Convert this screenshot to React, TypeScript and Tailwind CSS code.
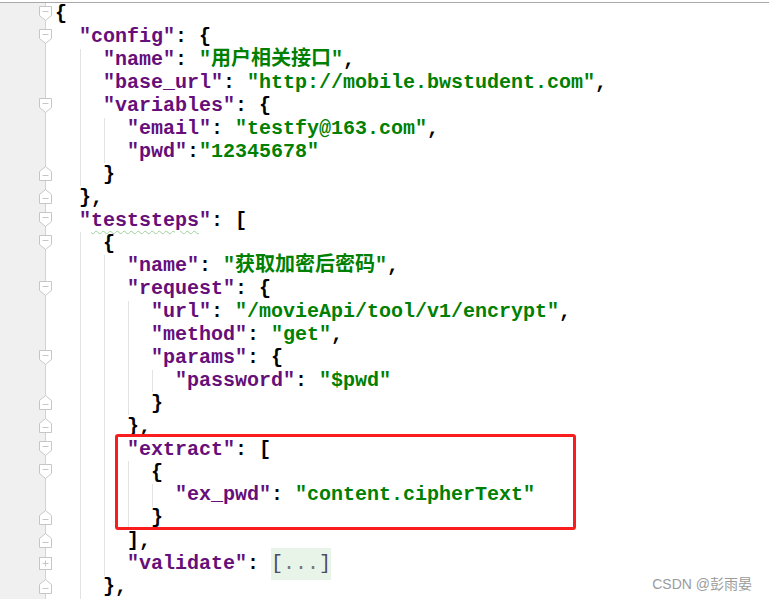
import React from "react";

type FoldKind = "down" | "up" | "plus" | null;

// fold marker for each visible line of the editor
const folds: FoldKind[] = [
  "down", "down", null, null, "down", null, null, "up", "up", "down",
  "down", null, "down", null, null, "down", null, "up", "up", "down",
  "down", null, "up", "up", "plus", "up",
];

const FoldMarker: React.FC<{ kind: Exclude<FoldKind, null> }> = ({ kind }) => (
  <svg
    width="13"
    height="15"
    viewBox="0 0 13 15"
    className="absolute right-[-7px] top-[3px]"
  >
    {kind === "down" && (
      <>
        <path d="M0.5 0.5H12.5V9.5L6.5 14.5L0.5 9.5Z" fill="#fff" stroke="#c6c6c6" />
        <path d="M3.5 5.5H9.5" stroke="#c6c6c6" />
      </>
    )}
    {kind === "up" && (
      <>
        <path d="M6.5 0.5L12.5 5.5V14.5H0.5V5.5Z" fill="#fff" stroke="#c6c6c6" />
        <path d="M3.5 9.5H9.5" stroke="#c6c6c6" />
      </>
    )}
    {kind === "plus" && (
      <>
        <rect x="0.5" y="1.5" width="12" height="12" fill="#fff" stroke="#c6c6c6" />
        <path d="M3.5 7.5H9.5M6.5 4.5V10.5" stroke="#c6c6c6" />
      </>
    )}
  </svg>
);

const Gutter = () => (
  <div className="flex w-[46px] shrink-0 flex-col border-r border-[#d2d2d2] bg-[#f0f0f0]">
    {folds.map((kind, i) => (
      <div key={i} className="relative h-[22.92px]">
        {kind && <FoldMarker kind={kind} />}
      </div>
    ))}
  </div>
);

const K = ({ children }: { children: React.ReactNode }) => (
  <span className="text-[#660e7a]">{children}</span>
);
const S = ({ children }: { children: React.ReactNode }) => (
  <span className="text-[#008000]">{children}</span>
);

const Line = ({ children }: { children: React.ReactNode }) => (
  <div className="flex h-[22.92px] items-center whitespace-pre">{children}</div>
);

const Block = ({
  open,
  close,
  guide = true,
  children,
}: {
  open: React.ReactNode;
  close?: React.ReactNode;
  guide?: boolean;
  children: React.ReactNode;
}) => (
  <div>
    <Line>{open}</Line>
    <div
      className={
        guide ? "ml-[1px] border-l border-[#e3e3e3] pl-[22px]" : "pl-[24px]"
      }
    >
      {children}
    </div>
    {close && <Line>{close}</Line>}
  </div>
);

const Code = () => (
  <div className="pl-[9px] font-bold text-black">
    <Block open="{" guide={false}>
      <Block
        open={
          <>
            <K>"config"</K>: {"{"}
          </>
        }
        close="},"
      >
        <Line>
          <K>"name"</K>: <S>"用户相关接口"</S>,
        </Line>
        <Line>
          <K>"base_url"</K>: <S>"http://mobile.bwstudent.com"</S>,
        </Line>
        <Block
          open={
            <>
              <K>"variables"</K>: {"{"}
            </>
          }
          close="}"
        >
          <Line>
            <K>"email"</K>: <S>"testfy@163.com"</S>,
          </Line>
          <Line>
            <K>"pwd"</K>:<S>"12345678"</S>
          </Line>
        </Block>
      </Block>
      <Block
        open={
          <>
            <K>
              "
              <span className="underline decoration-[#9ccf9c] decoration-wavy decoration-1 underline-offset-[4px]">
                teststeps
              </span>
              "
            </K>
            : [
          </>
        }
      >
        <Block open="{" close="},">
          <Line>
            <K>"name"</K>: <S>"获取加密后密码"</S>,
          </Line>
          <Block
            open={
              <>
                <K>"request"</K>: {"{"}
              </>
            }
            close="},"
          >
            <Line>
              <K>"url"</K>: <S>"/movieApi/tool/v1/encrypt"</S>,
            </Line>
            <Line>
              <K>"method"</K>: <S>"get"</S>,
            </Line>
            <Block
              open={
                <>
                  <K>"params"</K>: {"{"}
                </>
              }
              close="}"
            >
              <Line>
                <K>"password"</K>: <S>"$pwd"</S>
              </Line>
            </Block>
          </Block>
          <div className="relative">
            <Block
              open={
                <>
                  <K>"extract"</K>: [
                </>
              }
              close="],"
            >
              <Block open="{" close="}">
                <Line>
                  <K>"ex_pwd"</K>: <S>"content.cipherText"</S>
                </Line>
              </Block>
            </Block>
            <div className="absolute left-[-12px] top-[-4px] h-[96px] w-[461px] rounded-[3px] border-[3px] border-[#fa1d1d]" />
          </div>
          <Line>
            <K>"validate"</K>:{" "}
            <span className="bg-[#e8f4e8] py-[1px] font-normal text-[#4b4b62]">
              [<span className="text-[#777]">...</span>]
            </span>
          </Line>
        </Block>
      </Block>
    </Block>
  </div>
);

export default function App() {
  return (
    <div className="relative h-[600px] w-[769px] overflow-hidden bg-white font-['Liberation_Mono','Noto_Sans_CJK_SC',monospace] text-[20px]">
      <div className="mt-[2px] flex border-t border-[#a9a9a9]">
        <Gutter />
        <Code />
      </div>
      <div className="absolute bottom-[5px] right-[17px] font-['Liberation_Sans','Noto_Sans_CJK_SC',sans-serif] text-[14px] font-normal text-[#9b9b9b]">
        CSDN @彭雨晏
      </div>
    </div>
  );
}
